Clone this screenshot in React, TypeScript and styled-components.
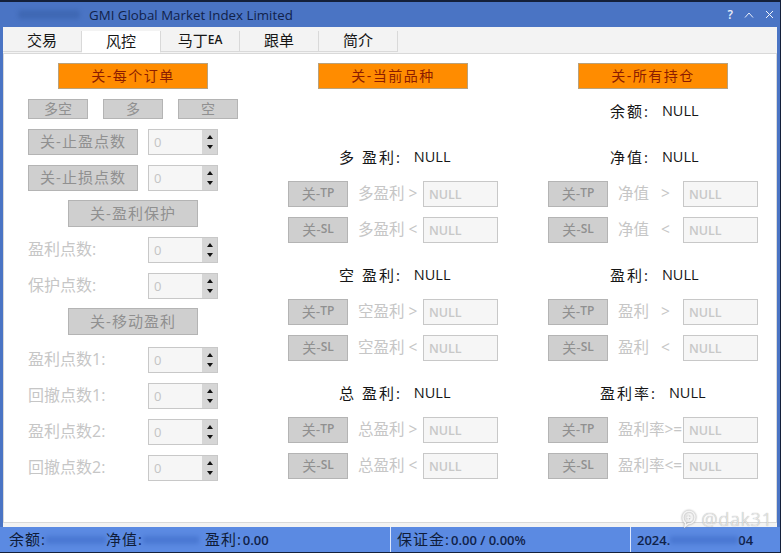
import React from 'react'
import styled, { createGlobalStyle } from 'styled-components'

const GlobalStyle = createGlobalStyle`
  html, body {
    margin: 0;
    padding: 0;
    background: #14203a;
  }
  * {
    box-sizing: border-box;
  }
`

const cjk = `"Open Sans", "Noto Sans CJK SC", sans-serif`

const tabs = ['交易', '风控', '马丁', '跟单', '简介']

const leftRows = [
  { label: '盈利点数:', top: 10 },
  { label: '保护点数:', top: 10 },
]

const trailRows = [
  { label: '盈利点数1:', top: 12 },
  { label: '回撤点数1:', top: 10 },
  { label: '盈利点数2:', top: 10 },
  { label: '回撤点数2:', top: 10 },
]

const midGroups = [
  { title: '多 盈利:', top: 59, up: '多盈利 >', down: '多盈利 <' },
  { title: '空 盈利:', top: 23, up: '空盈利 >', down: '空盈利 <' },
  { title: '总 盈利:', top: 23, up: '总盈利 >', down: '总盈利 <' },
]

const rightGroups = [
  { title: '净值:', left: 62, top: 26, up: '净值   >', down: '净值   <' },
  { title: '盈利:', left: 62, top: 23, up: '盈利   >', down: '盈利   <' },
  { title: '盈利率:', left: 52, top: 23, up: '盈利率>=', down: '盈利率<=' },
]

function Spinner() {
  return (
    <SpinBox>
      <SpinValue>0</SpinValue>
      <SpinArrows>
        <Arrow />
        <Arrow $down />
      </SpinArrows>
    </SpinBox>
  )
}

function LimitRow({ kind, label }: { kind: string; label: string }) {
  return (
    <LimitLine>
      <GreyButton $width={60} $size={14}>
        关-<b>{kind}</b>
      </GreyButton>
      <LimitLabel>{label}</LimitLabel>
      <NullBox>NULL</NullBox>
    </LimitLine>
  )
}

function App() {
  return (
    <Page>
      <GlobalStyle />
      <Window>
        <TitleBar>
          <TitleSmudge />
          <TitleText>GMI Global Market Index Limited</TitleText>
          <TitleButtons>
            <TitleGlyph>?</TitleGlyph>
            <svg width="10" height="6" viewBox="0 0 10 6">
              <path d="M1 5.5 L5 1 L9 5.5" fill="none" stroke="#e8eefa" strokeWidth="1" />
            </svg>
            <svg width="9" height="9" viewBox="0 0 9 9">
              <path d="M1 1 L8 8 M8 1 L1 8" fill="none" stroke="#f2f5fc" strokeWidth="1" />
            </svg>
          </TitleButtons>
        </TitleBar>

        <Client>
          <TabStrip>
            {tabs.map((t, i) => (
              <Tab key={t} $active={i === 1}>
                {t}
                {t === '马丁' && <TabSuffix>EA</TabSuffix>}
              </Tab>
            ))}
          </TabStrip>

          <Panel>
            <Column>
              <OrangeButton>关-每个订单</OrangeButton>
              <SideButtons>
                <GreyButton $width={60} $height={20} $size={14}>多空</GreyButton>
                <GreyButton $width={60} $height={20} $size={14}>多</GreyButton>
                <GreyButton $width={60} $height={20} $size={14}>空</GreyButton>
              </SideButtons>
              <SpinRow $top={10}>
                <GreyButton $width={110}>关-止盈点数</GreyButton>
                <Spinner />
              </SpinRow>
              <SpinRow $top={10}>
                <GreyButton $width={110}>关-止损点数</GreyButton>
                <Spinner />
              </SpinRow>
              <WideButton $top={9}>关-盈利保护</WideButton>
              {leftRows.map((r) => (
                <SpinRow key={r.label} $top={r.top}>
                  <SpinLabel>{r.label}</SpinLabel>
                  <Spinner />
                </SpinRow>
              ))}
              <WideButton $top={9}>关-移动盈利</WideButton>
              {trailRows.map((r) => (
                <SpinRow key={r.label} $top={r.top}>
                  <SpinLabel>{r.label}</SpinLabel>
                  <Spinner />
                </SpinRow>
              ))}
            </Column>

            <Column>
              <OrangeButton>关-当前品种</OrangeButton>
              {midGroups.map((g) => (
                <React.Fragment key={g.title}>
                  <Metric $top={g.top} $left={51}>
                    <MetricName>{g.title}</MetricName>
                    <MetricValue>NULL</MetricValue>
                  </Metric>
                  <LimitRow kind="TP" label={g.up} />
                  <LimitRow kind="SL" label={g.down} />
                </React.Fragment>
              ))}
            </Column>

            <Column>
              <OrangeButton>关-所有持仓</OrangeButton>
              <Metric $top={13} $left={62}>
                <MetricName>余额:</MetricName>
                <MetricValue>NULL</MetricValue>
              </Metric>
              {rightGroups.map((g) => (
                <React.Fragment key={g.title}>
                  <Metric $top={g.top} $left={g.left}>
                    <MetricName>{g.title}</MetricName>
                    <MetricValue>NULL</MetricValue>
                  </Metric>
                  <LimitRow kind="TP" label={g.up} />
                  <LimitRow kind="SL" label={g.down} />
                </React.Fragment>
              ))}
            </Column>

            <Watermark>
              <svg width="18" height="18" viewBox="0 0 18 21">
                <path
                  d="M9 1.5 C4.5 1.5 2 5 2 9 C2 12 3.5 14 5 15 L4.5 19 L8 16 C12.5 16 16 13 16 8.5 C16 4.5 13 1.5 9 1.5 Z M8 6 L8 12 M6 8.5 L11 8.5"
                  fill="none"
                  stroke="#f4f4f4"
                  strokeWidth="1.8"
                />
              </svg>
              <WatermarkText>@dak31</WatermarkText>
            </Watermark>
          </Panel>
        </Client>

        <StatusBar>
          <StatusCell $width={390}>
            <StatusName>余额:</StatusName>
            <Blurred $width={60} />
            <StatusName>净值:</StatusName>
            <Blurred $width={56} />
            <StatusName $gap={6}>盈利:</StatusName>
            <StatusNumber $gap={1}>0.00</StatusNumber>
          </StatusCell>
          <StatusCell $width={240} $divided>
            <StatusName>保证金:</StatusName>
            <StatusNumber $gap={1}>0.00 / 0.00%</StatusNumber>
          </StatusCell>
          <StatusCell $divided>
            <StatusNumber>2024.</StatusNumber>
            <Blurred $width={68} />
            <StatusNumber>04</StatusNumber>
          </StatusCell>
        </StatusBar>
      </Window>
    </Page>
  )
}

export default App

const Page = styled.div`
  width: 781px;
  height: 553px;
  padding: 2px 1px 1px 0;
  overflow: hidden;
  background: #14203a;
  font-family: ${cjk};
`

const Window = styled.div`
  display: flex;
  flex-direction: column;
  height: 100%;
  background: #4a74c4;
`

const TitleBar = styled.div`
  display: flex;
  align-items: center;
  flex: 0 0 25px;
  padding: 0 6px 0 18px;
  background: #4a74c4;
`

const TitleSmudge = styled.div`
  width: 62px;
  height: 9px;
  margin-right: 9px;
  border-radius: 4px;
  background: #3f68b4;
  filter: blur(2px);
`

const TitleText = styled.div`
  flex: 1;
  font-size: 13.3px;
  font-weight: 500;
  color: #11224a;
`

const TitleButtons = styled.div`
  display: flex;
  align-items: center;
  gap: 11px;
`

const TitleGlyph = styled.span`
  font-size: 12px;
  font-weight: 600;
  color: #e8eefa;
`

const Client = styled.div`
  flex: 0 0 500px;
  display: flex;
  flex-direction: column;
  margin: 0 3px 0 3px;
  padding-top: 4px;
  background: #f3f3f3;
`

const TabStrip = styled.div`
  display: flex;
  flex: 0 0 21px;
`

const Tab = styled.div<{ $active?: boolean }>`
  display: flex;
  align-items: center;
  justify-content: center;
  width: 79px;
  height: ${(p) => (p.$active ? 22 : 21)}px;
  padding-bottom: 3px;
  font-size: 15px;
  color: #161616;
  background: ${(p) => (p.$active ? '#ffffff' : '#f3f3f3')};
  border: 1px solid #d9d9d9;
  border-width: 0 1px 1px 0;
  position: relative;
  z-index: ${(p) => (p.$active ? 1 : 0)};
  border-bottom-color: ${(p) => (p.$active ? '#ffffff' : '#d9d9d9')};
`

const TabSuffix = styled.span`
  font-size: 12px;
  font-weight: 600;
`

const Panel = styled.div`
  position: relative;
  z-index: 1;
  display: grid;
  grid-template-columns: 260px 260px 1fr;
  flex: 0 0 470px;
  padding: 9px 0 0 24px;
  background: #ffffff;
  border: 1px solid #d9d9d9;
`

const Column = styled.div`
  display: flex;
  flex-direction: column;
  align-items: flex-start;
`

const OrangeButton = styled.div`
  display: flex;
  align-items: center;
  justify-content: center;
  width: 150px;
  height: 26px;
  margin-left: 30px;
  padding-bottom: 3px;
  font-size: 14px;
  letter-spacing: 1.5px;
  color: #8c1c00;
  background: #ff8c00;
  border: 1px solid #b9a27c;
`

const GreyButton = styled.div<{ $width: number; $height?: number; $size?: number }>`
  display: flex;
  align-items: center;
  justify-content: center;
  flex: 0 0 auto;
  width: ${(p) => p.$width}px;
  height: ${(p) => p.$height ?? 26}px;
  padding-bottom: 3px;
  font-size: ${(p) => p.$size ?? 15}px;
  letter-spacing: ${(p) => (p.$size ? 0 : 1)}px;
  color: #909090;
  background: #cfcfcf;
  border: 1px solid #b4b4b4;

  b {
    font-size: 12px;
    font-weight: 600;
  }
`

const WideButton = styled.div<{ $top: number }>`
  display: flex;
  align-items: center;
  justify-content: center;
  width: 130px;
  height: 27px;
  margin: ${(p) => p.$top}px 0 0 40px;
  padding-bottom: 3px;
  font-size: 15px;
  letter-spacing: 1px;
  color: #909090;
  background: #cfcfcf;
  border: 1px solid #b4b4b4;
`

const SideButtons = styled.div`
  display: flex;
  gap: 15px;
  margin-top: 10px;
`

const SpinRow = styled.div<{ $top: number }>`
  display: flex;
  align-items: center;
  justify-content: space-between;
  width: 190px;
  height: 26px;
  margin-top: ${(p) => p.$top}px;
`

const SpinLabel = styled.div`
  font-size: 16px;
  line-height: 20px;
  padding-bottom: 3px;
  color: #c6c6c6;
`

const SpinBox = styled.div`
  display: flex;
  width: 70px;
  height: 26px;
  background: #f6f6f6;
  border: 1px solid #c8c8c8;
`

const SpinValue = styled.div`
  flex: 1;
  padding-left: 5px;
  font-size: 13px;
  line-height: 24px;
  color: #c4c4c4;
`

const SpinArrows = styled.div`
  display: flex;
  flex-direction: column;
  align-items: center;
  justify-content: space-evenly;
  width: 15px;
  background: #d6d6d6;
`

const Arrow = styled.i<{ $down?: boolean }>`
  width: 0;
  height: 0;
  border-left: 3.5px solid transparent;
  border-right: 3.5px solid transparent;
  border-bottom: ${(p) => (p.$down ? '0' : '4px solid #111')};
  border-top: ${(p) => (p.$down ? '4px solid #111' : '0')};
`

const Metric = styled.div<{ $top: number; $left: number }>`
  display: flex;
  align-items: center;
  height: 20px;
  margin: ${(p) => p.$top}px 0 0 ${(p) => p.$left}px;
  padding-bottom: 3px;
  color: #161616;
`

const MetricName = styled.span`
  font-size: 15px;
  letter-spacing: 2px;
  margin-right: 12px;
`

const MetricValue = styled.span`
  font-size: 14.5px;
`

const LimitLine = styled.div`
  display: flex;
  align-items: center;
  height: 26px;
  margin-top: 10px;

  ${Metric} + & {
    margin-top: 13px;
  }
`

const LimitLabel = styled.div`
  width: 65px;
  margin-left: 10px;
  padding-bottom: 3px;
  font-size: 15.5px;
  line-height: 20px;
  white-space: pre;
  color: #c6c6c6;
`

const NullBox = styled.div`
  width: 75px;
  height: 26px;
  padding-left: 5px;
  font-size: 12.5px;
  font-weight: 600;
  line-height: 26px;
  color: #c8c8c8;
  background: #f6f6f6;
  border: 1px solid #c8c8c8;
`

const Watermark = styled.div`
  position: absolute;
  right: 3px;
  bottom: -6px;
  z-index: 2;
  display: flex;
  align-items: center;
  gap: 4px;
  height: 18px;
  font-size: 18px;
  font-weight: 300;
  letter-spacing: 1px;
  color: #ececec;
  text-shadow: 0 0 1px #8a8a8a;

  svg {
    filter: drop-shadow(0 0 1px #8a8a8a);
  }
`

const WatermarkText = styled.div`
  height: 18px;
  line-height: 18px;
`

const StatusBar = styled.div`
  display: flex;
  align-items: center;
  flex: 1;
  background: #5b8ae2;
`

const StatusCell = styled.div<{ $width?: number; $divided?: boolean }>`
  display: flex;
  align-items: center;
  height: 100%;
  width: ${(p) => (p.$width ? `${p.$width}px` : 'auto')};
  padding-left: ${(p) => (p.$divided ? 6 : 9)}px;
  border-left: ${(p) => (p.$divided ? '1px solid #dce8ff' : '0')};
`

const StatusName = styled.span<{ $gap?: number }>`
  margin-left: ${(p) => p.$gap ?? 0}px;
  padding-bottom: 2px;
  font-size: 15px;
  line-height: 18px;
  letter-spacing: 1px;
  color: #0f1c38;
`

const StatusNumber = styled.span<{ $gap?: number }>`
  margin-left: ${(p) => p.$gap ?? 0}px;
  font-size: 13px;
  font-weight: 600;
  line-height: 16px;
  color: #10224a;
`

const Blurred = styled.span<{ $width: number }>`
  width: ${(p) => p.$width}px;
  height: 8px;
  background: #4a78d2;
  filter: blur(2px);
`
